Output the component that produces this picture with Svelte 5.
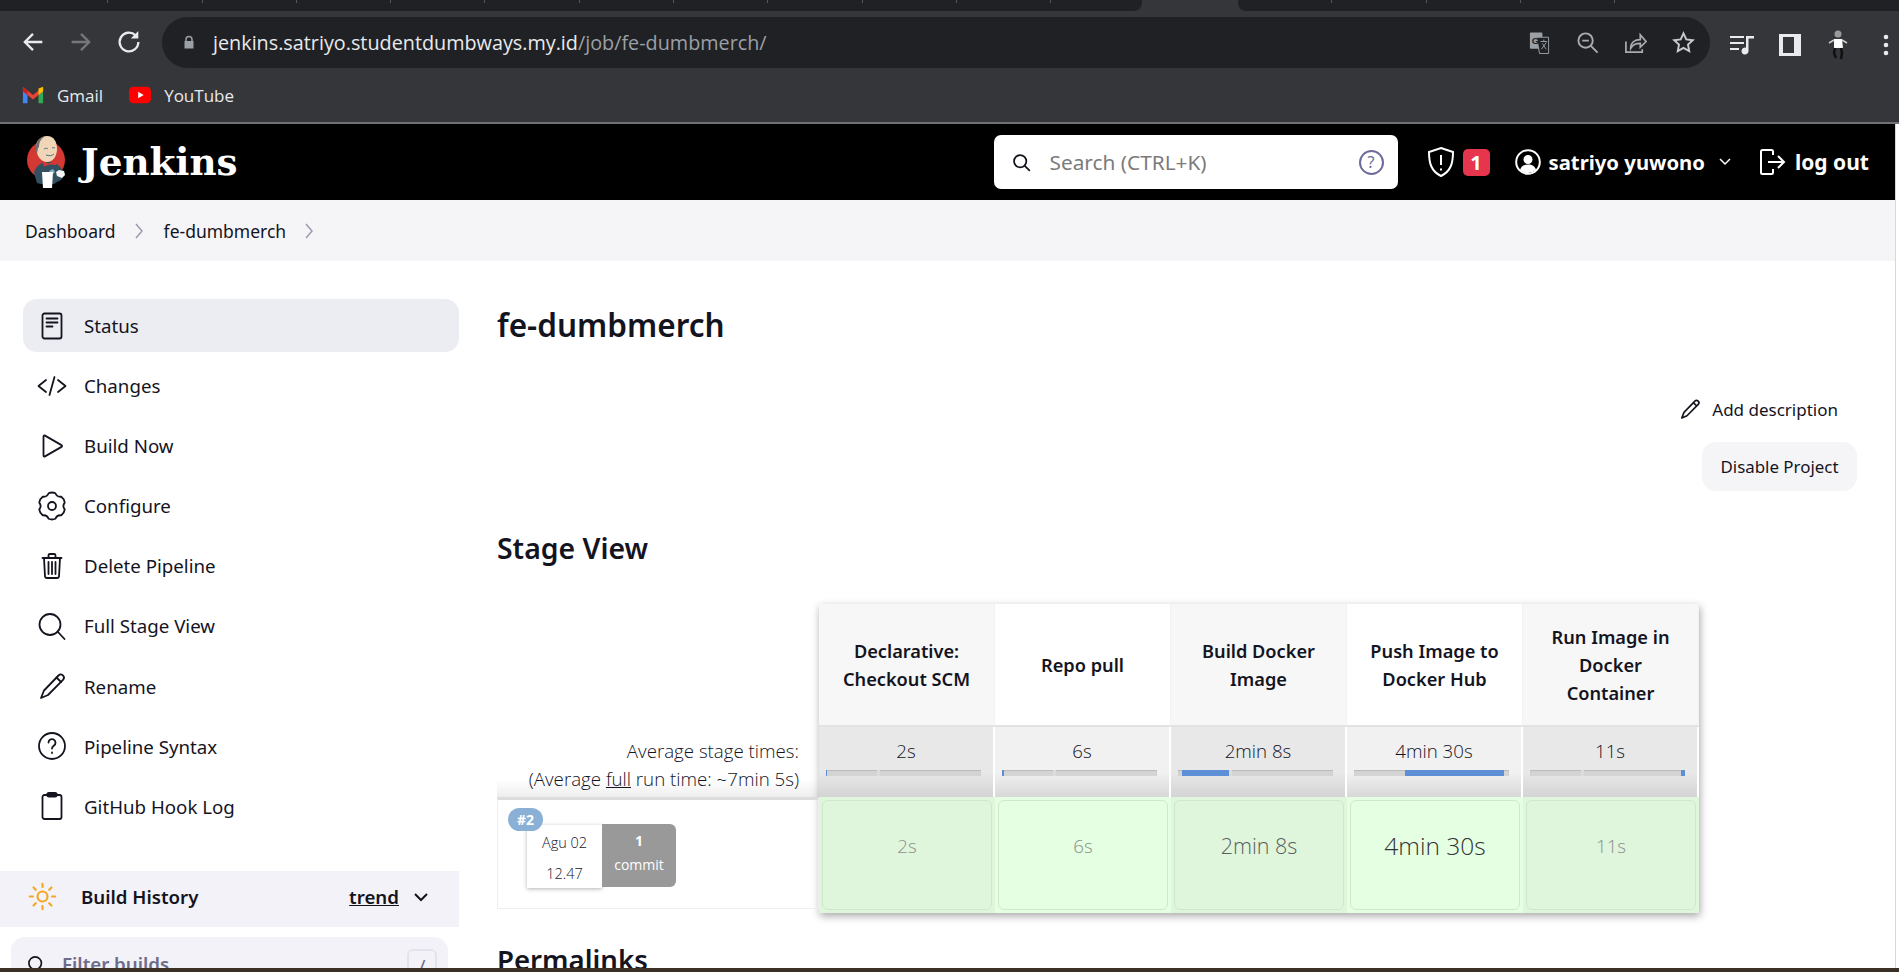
<script>
	// Page data
	const tabsBefore = Array(11);
	const tabsAfter = Array(4);

	function gearPath() {
		// six lobed cog, centred on 16,16
		let d = '';
		for (let i = 0; i < 6; i++) {
			const a = (i * 60 - 90) * Math.PI / 180;
			const s = 15 * Math.PI / 180;
			const pt = (ang, r) => `${(16 + r * Math.cos(ang)).toFixed(2)} ${(16 + r * Math.sin(ang)).toFixed(2)}`;
			d += (i === 0 ? 'M' : 'L') + pt(a - s, 13.2) + ' Q' + pt(a, 14.2) + ' ' + pt(a + s, 13.2);
			d += ' Q' + pt(a + Math.PI / 6, 10) + ' ' + pt(a + Math.PI / 3 - s, 13.2) + ' ';
		}
		return d + 'Z';
	}

	const menu = [
		{ label: 'Status', active: true, paths: ['M8.5 3.5h15a2 2 0 0 1 2 2v21a2 2 0 0 1-2 2h-15a2 2 0 0 1-2-2v-21a2 2 0 0 1 2-2z', 'M10.5 8.5h11', 'M10.5 12.5h11', 'M10.5 16.5h6'] },
		{ label: 'Changes', paths: ['M10 10l-7.5 6 7.5 6', 'M22 10l7.500 6-7.500 6', 'M18.500 7l-5 18'] },
		{ label: 'Build Now', paths: ['M7.500 6.500v19a1 1 0 0 0 1.500.9l16.500-9.500a1 1 0 0 0 0-1.800L9 5.600a1 1 0 0 0-1.500.9z'] },
		{ label: 'Configure', paths: [gearPath(), 'M16 12a4 4 0 1 0 0 8a4 4 0 1 0 0-8z'] },
		{ label: 'Delete Pipeline', paths: ['M6.500 8h19', 'M12.500 8V5.500A1.500 1.500 0 0 1 14 4h4a1.500 1.500 0 0 1 1.500 1.500V8', 'M8 8l1 18.500a2 2 0 0 0 2 1.500h10a2 2 0 0 0 2-1.500L24 8', 'M12.500 12v12', 'M16 12v12', 'M19.500 12v12'] },
		{ label: 'Full Stage View', paths: ['M14 4a10.500 10.500 0 1 0 0 21a10.500 10.500 0 1 0 0-21z', 'M21.500 21.500l7 7.500'] },
		{ label: 'Rename', paths: ['M8 20.500L22.500 5.500a3 3 0 0 1 4.500 4.300L12 25l-7 3z', 'M20.500 7.500l4.500 4.500'] },
		{ label: 'Pipeline Syntax', paths: ['M16 3a13 13 0 1 0 0 26a13 13 0 1 0 0-26z', 'M12.500 12.500a3.500 3.500 0 1 1 5.500 3c-1.300.9-2 1.600-2 3', 'M16 22.500v.6'] },
		{ label: 'GitHub Hook Log', paths: ['M8.500 5h15a2 2 0 0 1 2 2v20a2 2 0 0 1-2 2h-15a2 2 0 0 1-2-2V7a2 2 0 0 1 2-2z', 'M13 3h6a1.500 1.500 0 0 1 0 3.500h-6a1.500 1.500 0 0 1 0-3.500z'] }
	];

	// bar: left offset and width of the blue part, in % of the 155px track
	const stages = [
		{ name: 'Declarative: Checkout SCM', time: '2s', bar: [0, 0.6], size: 18.7, color: '#8a8f8a' },
		{ name: 'Repo pull', time: '6s', bar: [0, 1.6], size: 18.7, color: '#8a8f8a' },
		{ name: 'Build Docker Image', time: '2min 8s', bar: [2.400, 30.500], size: 21.500, color: '#5a605a' },
		{ name: 'Push Image to Docker Hub', time: '4min 30s', bar: [33, 64], size: 24.500, color: '#333' },
		{ name: 'Run Image in Docker Container', time: '11s', bar: [97.500, 2.500], size: 18.7, color: '#8a8f8a' }
	];
</script>

<div class="screen">
	<!-- Browser chrome -->
	<div class="tabstrip">
		<div class="tabs left">
			{#each tabsBefore as _}<span class="tab"></span>{/each}
		</div>
		<div class="active-tab"></div>
		<div class="tabs right">
			{#each tabsAfter as _}<span class="tab"></span>{/each}
		</div>
	</div>

	<div class="toolbar">
		<svg class="nav" viewBox="0 0 24 24" fill="none" stroke="#e8eaed" stroke-width="2"><path d="M20 12H5M12 5l-7 7 7 7"/></svg>
		<svg class="nav" viewBox="0 0 24 24" fill="none" stroke="#74777b" stroke-width="2"><path d="M4 12h15M12 5l7 7-7 7"/></svg>
		<svg class="nav" viewBox="0 0 24 24" fill="none" stroke="#e8eaed" stroke-width="2"><path d="M20 12a8 8 0 1 1-2.400-5.700"/><path d="M20 2.500v6.500h-6.500" fill="#e8eaed" stroke="none"/></svg>

		<div class="omnibox">
			<svg class="lock" viewBox="0 0 16 18" fill="#9aa0a6"><path d="M3 7V5a5 5 0 0 1 10 0v2h1v10H2V7zm2 0h6V5a3 3 0 0 0-6 0z"/></svg>
			<span class="url">jenkins.satriyo.studentdumbways.my.id<span class="path">/job/fe-dumbmerch/</span></span>
			<div class="omni-icons">
				<svg viewBox="0 0 24 24"><rect x="2" y="1.500" width="13" height="17" rx="1" fill="#9aa0a6"/><path d="M9 6.500h12.500v17H12z" fill="#202124" stroke="#9aa0a6"/><text x="3.800" y="13.500" font-size="10" font-weight="700" font-family="Liberation Sans, sans-serif" fill="#202124">G</text><path d="M13 11h7M16.500 9v2M14 19l5-7M15 13l4 6" stroke="#9aa0a6" fill="none"/></svg>
				<svg viewBox="0 0 24 24" fill="none" stroke="#a8abaf" stroke-width="2"><circle cx="10" cy="10" r="7.500"/><path d="M15.500 15.500l7 7M6.500 10h7"/></svg>
				<svg viewBox="0 0 24 24" fill="none" stroke="#a8abaf" stroke-width="1.800"><path d="M2 11v11h17v-3"/><path d="M7 18c0-6 4-9 10-9V4l6 7-6 6v-4c-5 0-8 1.500-10 5z"/></svg>
				<svg viewBox="0 0 24 24" fill="none" stroke="#c8cacd" stroke-width="2"><path d="M12 2.500l2.900 6.300 6.800.8-5 4.600 1.300 6.800-6-3.400-6 3.400 1.300-6.800-5-4.600 6.800-.8z"/></svg>
			</div>
		</div>

		<div class="ext-icons">
			<svg viewBox="0 0 24 24" fill="#e8eaed"><path d="M0 3h14v2H0zM0 9h14v2H0zM0 15h9v2H0z"/><path d="M16 3h8v2.500h-5.500V18a3.500 3.500 0 1 1-2.500-3.300z"/></svg>
			<svg viewBox="0 0 24 24" fill="#e8eaed"><path d="M1 1h22v22H1zM5 4v16h11V4z" fill-rule="evenodd"/></svg>
			<svg viewBox="0 0 24 32"><circle cx="12" cy="5" r="3.500" fill="#999"/><path d="M8 10h8l1 9H8z" fill="#fff"/><path d="M8 11l-5 3M16 11l5 3" stroke="#ccc" stroke-width="1.500"/><path d="M9 19l-1 5 2 5M15 19l1 5-1 6" stroke="#111" stroke-width="2.500" fill="none"/></svg>
			<svg viewBox="0 0 24 24" fill="#e8eaed"><circle cx="12" cy="4" r="2.300"/><circle cx="12" cy="12" r="2.300"/><circle cx="12" cy="20" r="2.300"/></svg>
		</div>
	</div>

	<div class="bookmarks">
		<div class="bookmark">
			<svg viewBox="0 0 24 24"><path d="M1 5v16h5V10z" fill="#4285f4"/><path d="M18 10v11h5V5z" fill="#34a853"/><path d="M1 3l11 9 11-9v5l-11 9L1 8z" fill="#ea4335"/><path d="M18 5l5-2v5l-5 4z" fill="#fbbc04"/><path d="M1 3l5 4v5L1 8z" fill="#c5221f"/></svg>
			<span>Gmail</span>
		</div>
		<div class="bookmark">
			<svg viewBox="0 0 24 24"><rect x="0" y="3" width="24" height="18" rx="5" fill="#f00"/><path d="M10 8.500l6 3.500-6 3.500z" fill="#fff"/></svg>
			<span>YouTube</span>
		</div>
	</div>

	<!-- Jenkins page -->
	<div class="page">
		<div class="content">
			<header>
				<svg class="logo" viewBox="24 134 44 58">
					<circle cx="46" cy="161" r="19" fill="#d33833"/>
					<path d="M34 174c1-6 6-10 12-11h7c5 2 9 6 12 12l-4 6-4 2-3 2H41l-4-1z" fill="#335061"/>
					<path d="M36 150c-1-8 5-13 11-13 7 0 10 6 10 13 0 7-4 13-10 13-6 0-10-6-11-13z" fill="#f0d6b7"/>
					<path d="M37 155c-3-8 0-16 8-18-4 3-6 6-6 11l-1 1z" fill="#6d6b6d"/>
					<path d="M44 150c2-1 3-1 4 0M52 149c1-.5 2-.5 3 0M46 156c3 1 6 1 8-1" stroke="#49728b" fill="none"/>
					<path d="M42 162l7 2.500 7-3.500v5l-6-.5-6 2z" fill="#d33833"/>
					<path d="M49 172l4-2 2 3-3 3z" fill="#81b0c4"/>
					<path d="M42 173h11l-1 16h-9z" fill="#fff"/>
					<path d="M56 173l3-2 5 1 1 4-3 3-5-2z" fill="#f4f4f4"/>
				</svg>
				<span class="wordmark">Jenkins</span>

				<div class="search">
					<svg viewBox="0 0 24 24" fill="none" stroke="#14141f" stroke-width="2"><circle cx="10.500" cy="10.500" r="7"/><path d="M15.500 15.500l6 6"/></svg>
					<span class="placeholder">Search (CTRL+K)</span>
					<span class="help">?</span>
				</div>

				<svg class="shield" viewBox="0 0 28 32" fill="none" stroke="#fff" stroke-width="2"><path d="M14 2l12 4c0 11-2 19-12 24C4 25 2 17 2 6z"/><path d="M14 9v10M14 22.500v2"/></svg>
				<span class="badge">1</span>

				<svg class="person" viewBox="0 0 26 26"><circle cx="13" cy="13" r="11.800" fill="none" stroke="#fff" stroke-width="2"/><circle cx="13" cy="10.500" r="4.500" fill="#fff"/><path d="M5 21c1-4 4-5.500 8-5.500s7 1.500 8 5.500a12 12 0 0 1-16 0z" fill="#fff"/></svg>
				<span class="user">satriyo yuwono</span>
				<svg class="caret" viewBox="0 0 14 10" fill="none" stroke="#fff" stroke-width="1.500"><path d="M2 2l5 5 5-5"/></svg>
				<svg class="logout" viewBox="0 0 28 28" fill="none" stroke="#fff" stroke-width="2"><path d="M15 7V3.500a1.500 1.500 0 0 0-1.500-1.500h-9A1.500 1.500 0 0 0 3 3.500v21A1.500 1.500 0 0 0 4.500 26h9a1.500 1.500 0 0 0 1.500-1.500V21"/><path d="M10 14h16M20 8l6 6-6 6"/></svg>
				<span class="user logout-label">log out</span>
			</header>

			<nav class="breadcrumb">
				<span>Dashboard</span>
				<svg viewBox="0 0 10 18" fill="none" stroke="#9a9ab0" stroke-width="1.500"><path d="M2 2l6 7-6 7"/></svg>
				<span>fe-dumbmerch</span>
				<svg viewBox="0 0 10 18" fill="none" stroke="#9a9ab0" stroke-width="1.500"><path d="M2 2l6 7-6 7"/></svg>
			</nav>

			<div class="columns">
				<aside>
					<div class="menu">
						{#each menu as item}
							<div class="item" class:active={item.active}>
								<svg viewBox="0 0 32 32" fill="none" stroke="#14141f" stroke-width="1.800" stroke-linecap="round" stroke-linejoin="round">
									{#each item.paths as d}<path {d}/>{/each}
								</svg>
								<span>{item.label}</span>
							</div>
						{/each}
					</div>

					<div class="history">
						<svg viewBox="0 0 32 32" fill="none" stroke="#f5a623" stroke-width="2.400" stroke-linecap="round"><circle cx="16" cy="16" r="5.500"/><path d="M16 2v3.500M16 26.500V30M2 16h3.500M26.500 16H30M6.100 6.100l2.500 2.500M23.400 23.400l2.500 2.500M6.100 25.900l2.500-2.500M23.400 8.600l2.500-2.500"/></svg>
						<strong>Build History</strong>
						<strong class="trend">trend</strong>
						<svg class="down" viewBox="0 0 16 10" fill="none" stroke="#14141f" stroke-width="2"><path d="M2 2l6 6 6-6"/></svg>
					</div>

					<div class="filter">
						<svg viewBox="0 0 24 24" fill="none" stroke="#14141f" stroke-width="2"><circle cx="11" cy="11" r="7.500"/><path d="M17 17l5 5"/></svg>
						<span>Filter builds...</span>
						<kbd>/</kbd>
					</div>
				</aside>

				<main>
					<h1>fe-dumbmerch</h1>

					<div class="actions">
						<div class="add-desc">
							<svg viewBox="0 0 32 32" fill="none" stroke="#14141f" stroke-width="2.200" stroke-linejoin="round"><path d="M8 20.500L22.500 5.500a3 3 0 0 1 4.500 4.300L12 25l-7 3z"/><path d="M20.500 7.500l4.500 4.500"/></svg>
							<span>Add description</span>
						</div>
						<div class="disable">Disable Project</div>
					</div>

					<h2>Stage View</h2>

					<div class="stage">
						<div class="stage-left">
							<div class="averages">
								<div>Average stage times:</div>
								<div>(Average <u>full</u> run time: ~7min 5s)</div>
							</div>
							<div class="build-row">
								<span class="build-no">#2</span>
								<div class="date">
									<div>Agu 02</div>
									<div>12.47</div>
								</div>
								<div class="commits">
									<b>1</b>
									<span>commit</span>
								</div>
							</div>
						</div>

						<div class="stage-grid">
							{#each stages as stage}
								<div class="col">
									<div class="head"><span>{stage.name}</span></div>
									<div class="avg">
										<span>{stage.time}</span>
										<div class="track">
											<div class="fill" style="left: {stage.bar[0]}%; width: {stage.bar[1]}%"></div>
										</div>
									</div>
									<div class="cell">
										<div class="cell-inner" style="font-size: {stage.size}px; color: {stage.color}">{stage.time}</div>
									</div>
								</div>
							{/each}
						</div>
					</div>

					<h2 class="permalinks">Permalinks</h2>
				</main>
			</div>
		</div>
		<div class="scrollbar"></div>
	</div>

	<div class="taskbar"></div>
</div>

<style>
	:global(body) {
		margin: 0;
		background: #fff;
	}

	.screen {
		height: 972px;
		display: flex;
		flex-direction: column;
		overflow: hidden;
		font-family: "Noto Sans", sans-serif;
		color: #14141f;
	}

	/* Browser chrome */
	.tabstrip {
		height: 11px;
		display: flex;
		background: #35363a;
		flex: none;
	}

	.tabs {
		display: flex;
		background: #202124;
		height: 11px;
	}

	.tabs.left {
		width: 1142px;
		padding-left: 14px;
		box-sizing: border-box;
		border-bottom-right-radius: 8px;
	}

	.tabs.right {
		flex: 1;
		border-bottom-left-radius: 8px;
	}

	.active-tab {
		width: 96px;
	}

	.tab {
		width: 93.3px;
		height: 3px;
		border-right: 1px solid #55565a;
	}

	.toolbar {
		height: 57px;
		flex: none;
		background: #35363a;
		display: flex;
		align-items: flex-start;
		box-sizing: border-box;
		padding: 6px 0 0 19px;
	}

	.nav {
		width: 28px;
		height: 28px;
		margin: 11px 20px 0 0;
		flex: none;
	}

	.omnibox {
		width: 1548px;
		height: 51px;
		margin-left: -1px;
		box-sizing: border-box;
		padding-left: 21px;
		border-radius: 26px;
		background: #202124;
		display: flex;
		align-items: center;
		flex: none;
	}

	.lock {
		width: 12px;
		height: 15px;
		margin-right: 18px;
	}

	.url {
		color: #e8eaed;
		font-size: 19.800px;
		font-family: "Open Sans", sans-serif;
		white-space: nowrap;
	}

	.path {
		color: #9aa0a6;
	}

	.omni-icons {
		margin-left: auto;
		display: flex;
		gap: 25px;
		margin-right: 15px;
	}

	.omni-icons svg {
		width: 23px;
		height: 23px;
	}

	.ext-icons {
		display: flex;
		gap: 24px;
		margin: 12px 0 0 20px;
		align-items: center;
	}

	.ext-icons svg {
		width: 24px;
		height: 24px;
		flex: none;
	}

	.ext-icons svg:nth-child(3) {
		height: 32px;
	}

	.bookmarks {
		height: 54px;
		flex: none;
		background: #35363a;
		border-bottom: 2px solid #707174;
		display: flex;
		align-items: center;
		padding: 0 0 0 22px;
		gap: 26px;
		box-sizing: content-box;
	}

	.bookmark {
		display: flex;
		align-items: center;
		gap: 13px;
		color: #e8eaed;
		font-size: 17px;
		font-family: "Open Sans", sans-serif;
	}

	.bookmark svg {
		width: 22px;
		height: 22px;
	}

	/* Jenkins page */
	.page {
		flex: 1;
		min-height: 0;
		display: flex;
		overflow: hidden;
	}

	.content {
		width: 1895px;
		flex: none;
	}

	.scrollbar {
		flex: 1;
		background: #fff;
		border-left: 1px solid #d8d8d8;
	}

	header {
		height: 76px;
		background: #000;
		color: #fff;
		display: flex;
		align-items: center;
		padding-left: 26px;
	}

	.logo {
		width: 44px;
		height: 58px;
		margin-left: -2px;
		flex: none;
	}

	.wordmark {
		font-family: "DejaVu Serif", serif;
		font-weight: 700;
		font-size: 37.300px;
		margin-left: 13px;
	}

	.search {
		margin-left: auto;
		width: 404px;
		height: 54px;
		background: #fff;
		border-radius: 7px;
		display: flex;
		align-items: center;
		padding: 0 14px 0 17px;
		box-sizing: border-box;
	}

	.search svg {
		width: 21px;
		height: 21px;
	}

	.placeholder {
		margin-left: 18px;
		color: #7b7b7b;
		font-size: 20.800px;
		flex: 1;
	}

	.help {
		width: 21px;
		height: 21px;
		border: 2px solid #6d6b9c;
		border-radius: 50%;
		color: #6d6b9c;
		font-size: 16px;
		line-height: 21px;
		text-align: center;
	}

	.shield {
		width: 28px;
		height: 32px;
		margin-left: 29px;
	}

	.badge {
		margin-left: 8px;
		width: 27px;
		height: 27px;
		border-radius: 5px;
		background: #e6354d;
		font-weight: 700;
		font-size: 20px;
		line-height: 27px;
		text-align: center;
	}

	.person {
		width: 26px;
		height: 26px;
		margin-left: 25px;
	}

	.user {
		font-weight: 700;
		font-size: 20.300px;
		margin-left: 8px;
	}

	.caret {
		width: 14px;
		height: 10px;
		margin-left: 13px;
	}

	.logout {
		width: 28px;
		height: 28px;
		margin-left: 26px;
	}

	.logout-label {
		margin: 0 26px 0 9px;
		font-size: 21px;
	}

	.breadcrumb {
		height: 61px;
		background: #f5f5f7;
		display: flex;
		align-items: center;
		padding-left: 25px;
		font-size: 17.500px;
	}

	.breadcrumb svg {
		width: 10px;
		height: 18px;
		margin: 0 20px 0 18px;
	}

	.columns {
		display: flex;
	}

	aside {
		width: 497px;
		flex: none;
	}

	.menu {
		width: 436px;
		margin: 38px 0 0 23px;
		display: flex;
		flex-direction: column;
		gap: 7.100px;
	}

	.item {
		height: 53px;
		display: flex;
		align-items: center;
		padding-left: 13px;
		gap: 16px;
		border-radius: 14px;
		font-size: 18.700px;
	}

	.item.active {
		background: #ecedf2;
	}

	.item svg {
		width: 32px;
		height: 32px;
		flex: none;
	}

	.history {
		width: 459px;
		height: 56px;
		box-sizing: border-box;
		margin-top: 38px;
		padding: 0 30px 4px 28px;
		background: #f2f2f8;
		display: flex;
		align-items: center;
		font-size: 18.700px;
	}

	.history svg {
		width: 29px;
		height: 29px;
		flex: none;
	}

	.history strong {
		margin-left: 24px;
		font-weight: 600;
	}

	.history .trend {
		margin-left: auto;
		text-decoration: underline;
	}

	.history .down {
		width: 16px;
		height: 10px;
		margin-left: 14px;
	}

	.filter {
		width: 437px;
		height: 60px;
		box-sizing: border-box;
		margin: 10px 0 0 11px;
		padding: 0 11px 0 15px;
		background: #f2f2f8;
		border-radius: 14px;
		display: flex;
		align-items: flex-start;
		color: #6d6b8a;
		font-size: 18.700px;
		font-weight: 600;
	}

	.filter svg {
		width: 20px;
		height: 20px;
		margin: 17px 16px 0 0;
	}

	.filter span {
		flex: 1;
		margin-top: 14px;
	}

	.filter kbd {
		width: 26px;
		height: 30px;
		margin-top: 12px;
		border: 2px solid #e3e3ee;
		border-radius: 6px;
		font-family: inherit;
		font-weight: 400;
		text-align: center;
		line-height: 30px;
	}

	main {
		flex: 1;
		padding-right: 38px;
	}

	h1 {
		margin: 44px 0 0;
		font-size: 31.500px;
		line-height: 40px;
		font-weight: 600;
	}

	.actions {
		margin-top: 48px;
		display: flex;
		flex-direction: column;
		align-items: flex-end;
	}

	.add-desc {
		height: 32px;
		display: flex;
		align-items: center;
		gap: 10px;
		font-size: 17px;
		margin-right: 19px;
	}

	.add-desc svg {
		width: 24px;
		height: 24px;
	}

	.disable {
		margin-top: 17px;
		width: 155px;
		height: 49px;
		background: #f5f5f7;
		border-radius: 14px;
		font-size: 16.900px;
		line-height: 49px;
		text-align: center;
	}

	h2 {
		margin: 37px 0 0;
		font-size: 28.400px;
		line-height: 40px;
		font-weight: 600;
	}

	.stage {
		margin-top: 36px;
		display: flex;
		font-family: "Open Sans", sans-serif;
	}

	.stage-left {
		width: 322px;
		flex: none;
		padding-top: 123px;
		box-sizing: border-box;
	}

	.averages {
		height: 70px;
		box-sizing: border-box;
		padding: 10px 20px 0 0;
		text-align: right;
		font-size: 18.700px;
		font-weight: 300;
		line-height: 28px;
		background: linear-gradient(#fff 75%, #eee);
	}

	.build-row {
		position: relative;
		height: 112px;
		box-sizing: border-box;
		border: 1px solid #eee;
		border-top: 3px solid #dcdcdc;
		padding: 25px 0 0 29px;
		display: flex;
		align-items: flex-start;
	}

	.build-no {
		position: absolute;
		left: 10px;
		top: 8px;
		width: 35px;
		height: 23px;
		border-radius: 12px;
		background: #8ab0d6;
		color: #fff;
		font-size: 14px;
		font-weight: 700;
		line-height: 23px;
		text-align: center;
	}

	.date {
		width: 75px;
		height: 63px;
		box-shadow: 0 1px 4px rgba(0, 0, 0, 0.3);
		background: #fff;
		text-align: center;
		font-size: 14.500px;
		font-weight: 300;
		line-height: 31px;
		padding-top: 2px;
		box-sizing: border-box;
	}

	.commits {
		width: 74px;
		height: 63px;
		margin-top: -1px;
		background: #999;
		border-radius: 0 6px 6px 0;
		color: #fff;
		display: flex;
		flex-direction: column;
		align-items: center;
		font-size: 14px;
		line-height: 24px;
		padding-top: 5px;
		box-sizing: border-box;
	}

	.stage-grid {
		display: flex;
		box-shadow: 1px 3px 8px rgba(0, 0, 0, 0.35);
	}

	.col {
		width: 176px;
	}

	.head {
		height: 123px;
		box-sizing: border-box;
		padding: 1px 22px 0;
		display: flex;
		align-items: center;
		justify-content: center;
		text-align: center;
		font-family: "Noto Sans", sans-serif;
		font-weight: 600;
		font-size: 18.200px;
		line-height: 28px;
		background: #fff;
		border-right: 1px solid #f2f2f2;
		border-bottom: 2px solid #e2e2e2;
	}

	.col:nth-child(odd) .head {
		background: #f7f7f7;
	}

	.avg {
		height: 70px;
		box-sizing: border-box;
		padding-top: 10px;
		text-align: center;
		font-size: 18.700px;
		font-weight: 300;
		line-height: 28px;
		background: linear-gradient(#f1f1f1 65%, #d8d8d8);
		border-right: 2px solid #fff;
	}

	.col:nth-child(odd) .avg {
		background: linear-gradient(#e8e8e8 65%, #d4d4d4);
	}

	.track {
		position: relative;
		width: 155px;
		height: 6px;
		margin: 5px 0 0 7px;
		background: #d4d4d4;
		box-shadow: inset 0 1px 1px rgba(0, 0, 0, 0.12);
	}

	.track::after {
		content: "";
		position: absolute;
		left: 33%;
		top: 0;
		bottom: 0;
		width: 3px;
		background: #dcdcdc;
	}

	.fill {
		position: absolute;
		top: 0;
		bottom: 0;
		z-index: 1;
		background: #5d8fd6;
	}

	.cell {
		height: 116px;
		box-sizing: border-box;
		padding: 3px;
		background: #e5ffe3;
	}

	.col:nth-child(odd) .cell {
		background: #dff6dd;
	}

	.cell-inner {
		height: 110px;
		box-sizing: border-box;
		padding-top: 30px;
		border: 1px solid #cfe8cd;
		border-radius: 6px;
		text-align: center;
		font-weight: 300;
		line-height: 30px;
	}

	.permalinks {
		margin-top: 26px;
		font-size: 27.600px;
	}

	.taskbar {
		height: 4px;
		flex: none;
		background: #3a3025;
	}
</style>
